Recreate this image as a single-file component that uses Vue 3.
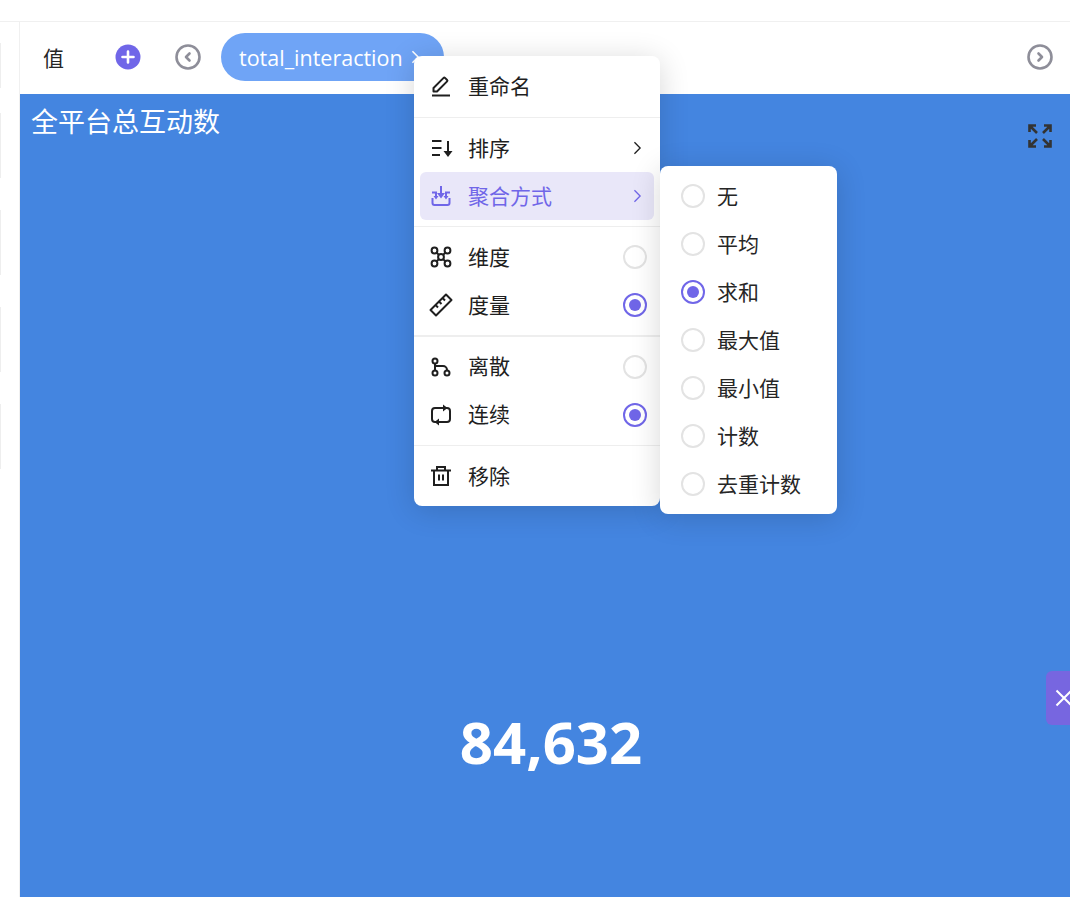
<script setup>
const icons = {
  rename: {
    stroke: 'M4.5 16.5V13L14.6 2.9a1 1 0 0 1 1.4 0l2.100 2.100a1 1 0 0 1 0 1.400L8 16.500z',
    line: 'M3 20.500h18',
  },
  sort: {
    line: 'M3 5h9.500M3 12h9.500M3 19h8M19 5v12',
    fill: 'M14.500 15h9L19 21z',
  },
  agg: {
    line: 'M12 2v8M3.500 14v5a2 2 0 0 0 2 2h13a2 2 0 0 0 2-2v-5M3 8.500h4v4M21 8.500h-4v4',
    fill: 'M8 9h8l-4 5.500zM4.500 12h5L7 15.500zM14.500 12h5L17 15.500z',
  },
  dim: {
    circles: [[5.5, 5.5], [18.5, 5.5], [5.5, 18.5], [18.5, 18.5], [12, 12]],
    r: 2.9,
    line: 'M7.500 7.500l2.400 2.400M16.500 7.500l-2.400 2.400M7.500 16.500l2.400-2.400M16.500 16.500l-2.400-2.400',
  },
  measure: {
    stroke: 'M1.500 17 17 1.500 22.500 7 7 22.500z',
    line: 'M6.500 12l2.500 2.500M10 8.500l2.500 2.500M13.500 5l2.500 2.500',
  },
  discrete: {
    circles: [[6, 6], [6, 18], [18, 18]],
    r: 2.5,
    line: 'M6 8.500v7M6 11h8a4 4 0 0 1 4 4v.500',
  },
  continuous: {
    line: 'M14 5H6a3 3 0 0 0-3 3v8a3 3 0 0 0 3 3h2M10 19h8a3 3 0 0 0 3-3V8a3 3 0 0 0-3-3h-2',
    fill: 'M14 1.500 18.500 5 14 8.500zM10 15.500 5.500 19l4.500 3.500z',
  },
  remove: {
    line: 'M2 6.500h20M8 6.500V3h8v3.500M5 6.500V21h14V6.500M10 10.500v6M14 10.500v6',
  },
}

const groups = [
  [{ label: '重命名', icon: 'rename' }],
  [
    { label: '排序', icon: 'sort', arrow: true },
    { label: '聚合方式', icon: 'agg', arrow: true, active: true },
  ],
  [
    { label: '维度', icon: 'dim', radio: true, checked: false },
    { label: '度量', icon: 'measure', radio: true, checked: true },
  ],
  [
    { label: '离散', icon: 'discrete', radio: true, checked: false },
    { label: '连续', icon: 'continuous', radio: true, checked: true },
  ],
  [{ label: '移除', icon: 'remove' }],
]

const aggregations = [
  { label: '无' },
  { label: '平均' },
  { label: '求和', checked: true },
  { label: '最大值' },
  { label: '最小值' },
  { label: '计数' },
  { label: '去重计数' },
]

const sideMarks = [45, 65, 65, 65, 65]
</script>

<template>
  <div class="page">
    <div class="topbar"></div>
    <div class="body">
      <aside class="side">
        <i v-for="(h, i) in sideMarks" :key="i" class="mark" :style="{ height: h + 'px' }"></i>
      </aside>
      <main class="main">
        <div class="fields">
          <span class="fields-label">值</span>
          <svg class="round-btn add" viewBox="0 0 26 26">
            <circle cx="13" cy="13" r="12.5" fill="#7066e8" />
            <path d="M13 7.500v11M7.500 13h11" stroke="#fff" stroke-width="2.6" stroke-linecap="round" />
          </svg>
          <svg class="round-btn prev" viewBox="0 0 26 26" fill="none" stroke="#8e8e99">
            <circle cx="13" cy="13" r="11.500" stroke-width="2.6" />
            <path d="M14.500 9.500 11 13l3.500 3.500" stroke-width="2.6" stroke-linecap="round" stroke-linejoin="round" />
          </svg>
          <div class="pill">
            <span>total_interaction</span>
            <svg viewBox="0 0 10 16" fill="none" stroke="#fff" stroke-width="1.8"><path d="M1.500 1.500 8 8l-6.500 6.500" /></svg>
          </div>
          <svg class="round-btn next" viewBox="0 0 26 26" fill="none" stroke="#8e8e99">
            <circle cx="13" cy="13" r="11.500" stroke-width="2.6" />
            <path d="M11.500 9.500 15 13l-3.500 3.500" stroke-width="2.6" stroke-linecap="round" stroke-linejoin="round" />
          </svg>
        </div>
        <section class="card">
          <div class="card-head">
            <h1>全平台总互动数</h1>
            <svg class="expand" viewBox="0 0 24 24" fill="none" stroke="#333" stroke-width="2.6">
              <path d="M1.500 8V1.500H8M1.500 1.500 9 9M16 1.500h6.500V8M22.500 1.500 15 9M1.500 16v6.500H8M1.500 22.500 9 15M16 22.500h6.500V16M22.500 22.500 15 15" />
            </svg>
          </div>
          <div class="value">84,632</div>
        </section>
      </main>
    </div>

    <div class="menu">
      <template v-for="(group, g) in groups" :key="g">
        <hr v-if="g > 0" class="sep" />
        <div
          v-for="item in group"
          :key="item.label"
          class="row"
          :class="{ active: item.active }"
        >
          <svg class="row-icon" viewBox="0 0 24 24" fill="none" stroke="currentColor" stroke-width="2">
            <path v-if="icons[item.icon].stroke" :d="icons[item.icon].stroke" stroke-linejoin="round" />
            <path v-if="icons[item.icon].line" :d="icons[item.icon].line" />
            <path v-if="icons[item.icon].fill" :d="icons[item.icon].fill" fill="currentColor" stroke="none" />
            <circle
              v-for="c in icons[item.icon].circles"
              :key="c.join()"
              :cx="c[0]"
              :cy="c[1]"
              :r="icons[item.icon].r"
            />
          </svg>
          <span class="row-label">{{ item.label }}</span>
          <svg v-if="item.arrow" class="row-arrow" viewBox="0 0 10 16" fill="none" stroke="currentColor" stroke-width="1.500">
            <path d="M1.500 1.500 8 8l-6.500 6.500" />
          </svg>
          <span v-if="item.radio" class="radio" :class="{ on: item.checked }"></span>
        </div>
      </template>
    </div>

    <div class="submenu">
      <div v-for="opt in aggregations" :key="opt.label" class="sub-row">
        <span class="radio" :class="{ on: opt.checked }"></span>
        <span class="sub-label">{{ opt.label }}</span>
      </div>
    </div>

    <button type="button" class="close-tab" aria-label="关闭">
      <svg viewBox="0 0 18 18" fill="none" stroke="#fff" stroke-width="2"><path d="M1.500 1.500l15 15M16.500 1.500l-15 15" /></svg>
    </button>
  </div>
</template>

<style>
html, body { margin: 0; overflow: hidden; }
</style>

<style scoped>
.page {
  position: relative;
  height: 100vh;
  overflow: hidden;
  background: #fff;
  color: #1f1f1f;
  font-family: "Open Sans", "Noto Sans CJK SC", sans-serif;
}
.topbar {
  height: 21px;
  border-bottom: 1px solid #f0f0f0;
}
.body {
  display: flex;
  height: calc(100% - 22px);
}
.side {
  flex: none;
  box-sizing: border-box;
  width: 20px;
  padding-top: 21px;
  border-right: 1px solid #f0f0f0;
  display: flex;
  flex-direction: column;
  gap: 32px;
}
.mark {
  display: block;
  width: 1px;
  background: #eeeeee;
}
.mark:first-child { margin-bottom: -7px; }
.main {
  flex: 1;
  min-width: 0;
  display: flex;
  flex-direction: column;
}
.fields {
  flex: none;
  box-sizing: border-box;
  height: 72px;
  padding: 0 17px 2px 23px;
  display: flex;
  align-items: center;
}
.fields-label {
  font-size: 21px;
  width: 72px;
  color: #262626;
}
.round-btn {
  flex: none;
  width: 26px;
  height: 26px;
}
.prev { margin-left: 34px; }
.next { margin-left: auto; }
.pill {
  margin-left: 20px;
  box-sizing: border-box;
  width: 223px;
  height: 48px;
  padding: 0 18px;
  border-radius: 24px;
  background: #6fa4f6;
  color: #fff;
  font-size: 21.5px;
  display: flex;
  align-items: center;
  gap: 8px;
}
.pill svg { width: 9px; height: 14px; }
.card {
  flex: 1;
  background: #4485e0;
  color: #fff;
}
.card-head {
  display: flex;
  justify-content: space-between;
  padding: 8px 18px 0 11px;
}
.card-head h1 {
  margin: 0;
  font-size: 27px;
  font-weight: 400;
  line-height: 40px;
}
.expand {
  width: 24px;
  height: 24px;
  margin-top: 22px;
}
.value {
  margin-top: 559px;
  padding-left: 12px;
  text-align: center;
  font-size: 58px;
  font-weight: 700;
  line-height: 70px;
}

.menu {
  position: absolute;
  left: 414px;
  top: 56px;
  box-sizing: border-box;
  width: 246px;
  height: 450px;
  padding: 6.7px 6px 0;
  background: #fff;
  border-radius: 8px;
  box-shadow: 0 4px 30px rgba(0, 0, 0, 0.16);
}
.sep {
  height: 1.33px;
  margin: 6px -6px;
  border: 0;
  background: #eeeeee;
}
.row {
  height: 48px;
  padding: 0 7px 0 9px;
  display: flex;
  align-items: center;
  border-radius: 6px;
  font-size: 21px;
}
.row.active {
  background: #e9e7f9;
  color: #7066e8;
}
.row-icon {
  flex: none;
  width: 24px;
  height: 24px;
  margin-right: 15px;
}
.row-label {
  flex: 1;
  margin-bottom: 3px;
}
.row-arrow {
  width: 9px;
  height: 14px;
  margin-right: 5px;
}
.radio {
  flex: none;
  box-sizing: border-box;
  width: 24px;
  height: 24px;
  border: 2px solid #e3e3e3;
  border-radius: 50%;
  background: #fff;
  display: flex;
  align-items: center;
  justify-content: center;
}
.radio.on { border-color: #7066e8; }
.radio.on::after {
  content: "";
  width: 12px;
  height: 12px;
  border-radius: 50%;
  background: #7066e8;
}
.submenu {
  position: absolute;
  left: 660px;
  top: 166px;
  box-sizing: border-box;
  width: 177px;
  height: 348px;
  padding: 6px 0;
  background: #fff;
  border-radius: 8px;
  box-shadow: 0 4px 30px rgba(0, 0, 0, 0.16);
}
.sub-row {
  height: 48px;
  padding-left: 21px;
  display: flex;
  align-items: center;
  gap: 12px;
  font-size: 21px;
  color: #262626;
}
.sub-label { margin-bottom: 2px; }
.close-tab {
  position: absolute;
  right: 0;
  top: 671px;
  width: 24px;
  height: 54px;
  padding: 0 0 0 9px;
  border: 0;
  border-radius: 6px 0 0 6px;
  background: #7766e0;
  display: flex;
  align-items: center;
  overflow: hidden;
}
.close-tab svg {
  flex: none;
  width: 18px;
  height: 18px;
}
</style>
